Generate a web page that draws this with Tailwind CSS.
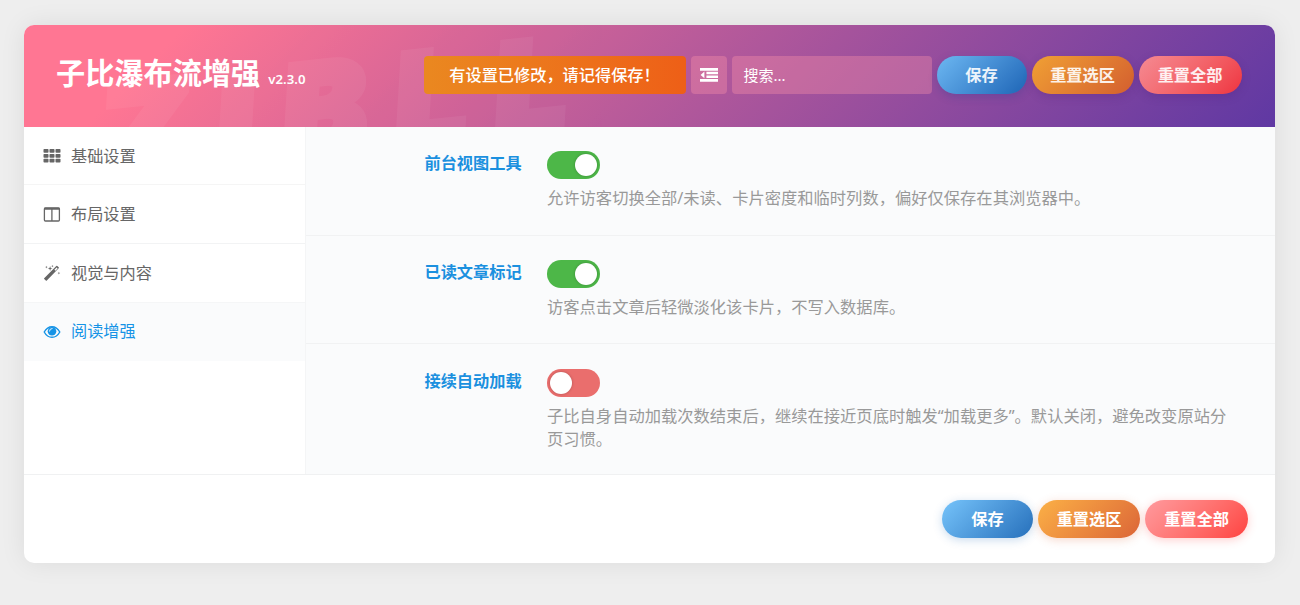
<!DOCTYPE html>
<html lang="zh-CN">
<head>
    <meta charset="UTF-8">
    <meta name="viewport" content="width=device-width, initial-scale=1.0">
    <title>子比瀑布流增强</title>
    <script src="https://cdn.jsdelivr.net/npm/@tailwindcss/browser@4"></script>
</head>
<body class="h-[605px] overflow-hidden bg-[#eeeeee] pt-[25px] pl-6 font-['Noto_Sans','Noto_Sans_CJK_SC',sans-serif] text-[16.2px]">
    <div class="w-[1251px] h-[538px] flex flex-col overflow-hidden rounded-[10px] bg-white shadow-[0_0_26px_rgba(0,0,0,0.08)]">

        <!-- Header -->
        <header class="relative h-[102px] shrink-0 overflow-hidden flex items-center justify-between pl-8 pr-[33.5px] pb-[2px] bg-[linear-gradient(135deg,#ff7693_12%,#5f38a3_100%)] text-white">
            <div class="absolute left-[75px] top-[19px] text-[126px] leading-[124px] font-black italic tracking-[29px] font-['Inter'] [-webkit-text-stroke:8px_white] opacity-5 -rotate-6 select-none">ZIBLL</div>
            <h1 class="relative flex items-baseline gap-2 text-[29.2px] leading-none font-bold whitespace-nowrap pb-[3px]">
                子比瀑布流增强 <small class="text-[13.2px] font-semibold">v2.3.0</small>
            </h1>
            <div class="relative flex items-center gap-[5px]">
                <div class="w-[262px] h-[38px] flex items-center justify-center rounded-[4px] bg-linear-to-r from-[#ea8820] to-[#ee5f17] font-medium whitespace-nowrap">有设置已修改，请记得保存！</div>
                <button class="w-[36px] h-[38px] flex items-center justify-center rounded-[4px] bg-[#ff96aa]/35">
                    <svg class="w-[18px] h-[14px]" viewBox="0 0 18 14" fill="currentColor">
                        <path d="M0 0h18v2.7H0zM6.4 3.7H18v2.6H6.4zM6.4 7.4H18V10H6.4zM0 11.1h18v2.7H0zM4.4 3.6v6.6L.6 6.9z"/>
                    </svg>
                </button>
                <div class="w-[200px] h-[38px] flex items-center rounded-[4px] bg-[#ff96aa]/35 px-3 text-[15px]">搜索...</div>
                <button class="w-[90px] h-[38px] rounded-full bg-linear-135 from-[#6db8f2] to-[#1d65b6] font-bold text-white/90 shadow-[0_3px_8px_rgba(30,60,140,0.25)]">保存</button>
                <button class="w-[102px] h-[38px] rounded-full bg-linear-135 from-[#f0a034] to-[#d35e2f] font-bold text-white/90 shadow-[0_3px_8px_rgba(80,30,120,0.25)]">重置选区</button>
                <button class="w-[103px] h-[38px] rounded-full bg-linear-135 from-[#f58a93] to-[#ee3140] font-bold text-white/90 shadow-[0_3px_8px_rgba(80,30,120,0.25)]">重置全部</button>
            </div>
        </header>

        <div class="flex h-[348px] shrink-0 border-b border-[#f0f1f2]">
            <!-- Sidebar -->
            <nav class="w-[282px] border-r border-[#f4f5f6] text-[#666]">
                <a class="flex items-center gap-[10px] h-[58px] pl-[19px] pt-px border-b border-[#f5f5f5]">
                    <svg class="w-[18px] h-[14px]" viewBox="0 0 18 14" fill="currentColor">
                        <rect x=".5" width="5" height="3.8" rx=".8"/><rect x="6.5" width="5" height="3.8" rx=".8"/><rect x="12.5" width="5" height="3.8" rx=".8"/>
                        <rect x=".5" y="4.9" width="5" height="3.8" rx=".8"/><rect x="6.5" y="4.9" width="5" height="3.8" rx=".8"/><rect x="12.5" y="4.9" width="5" height="3.8" rx=".8"/>
                        <rect x=".5" y="9.8" width="5" height="3.8" rx=".8"/><rect x="6.5" y="9.8" width="5" height="3.8" rx=".8"/><rect x="12.5" y="9.8" width="5" height="3.8" rx=".8"/>
                    </svg>
                    基础设置
                </a>
                <a class="flex items-center gap-[10px] h-[59px] pl-[19px] border-b border-[#f2f3f4]">
                    <svg class="w-[18px] h-[15px]" viewBox="0 0 18 15" fill="none" stroke="currentColor">
                        <rect x="1.4" y="1" width="15" height="13" rx="1" stroke-width="1.3"/>
                        <path d="M1.2 1.8h15.4" stroke-width="2"/>
                        <path d="M8.9 2v12" stroke-width="1.3"/>
                    </svg>
                    布局设置
                </a>
                <a class="flex items-center gap-[10px] h-[59px] pl-[19px] border-b border-[#f5f6f7]">
                    <svg class="w-[18px] h-[16px]" viewBox="0 0 18 16" fill="currentColor">
                        <path fill-rule="evenodd" d="M1.2 13.2 13.3.9q.5-.4 1 0l1.4 1.4q.5.5 0 1L3.8 15.5q-.5.4-1 0l-1.6-1.4q-.4-.4 0-.9zM11.4 4.7l1.1 1 2.1-2.2-1-1z"/>
                        <path d="m3.4.8.3 1 1 .3-1 .3-.3 1-.3-1-1-.3 1-.3zM7.1 1.1l.6 1.8 1.8.6-1.8.6-.6 1.8-.6-1.8-1.8-.6 1.8-.6zM15.9 6.8l.3 1 1 .3-1 .3-.3 1-.3-1-1-.3 1-.3zM9.4 0l.3.8.9.3-.9.3-.3.9-.3-.9-.8-.3.8-.3z"/>
                    </svg>
                    视觉与内容
                </a>
                <a class="flex items-center gap-[10px] h-[58px] pl-[19px] pb-px bg-[#fafbfc] text-[#1593e6]">
                    <svg class="w-[18px] h-[14px]" viewBox="0 0 18 14">
                        <path d="M1.2 7C3 3.8 5.8 1.7 9 1.7S15 3.8 16.8 7C15 10.2 12.2 12.3 9 12.3S3 10.2 1.2 7z" fill="none" stroke="currentColor" stroke-width="1.4"/>
                        <circle cx="9" cy="6.2" r="4.3" fill="currentColor"/>
                        <path d="M6.5 6.1A2.6 2.6 0 0 1 9.1 3.5" fill="none" stroke="#fff" stroke-width=".9" stroke-linecap="round"/>
                    </svg>
                    阅读增强
                </a>
            </nav>

            <!-- Settings -->
            <main class="flex-1 bg-[#fafbfc] text-[#999]">
                <section class="flex h-[109px] pt-[24px] border-b border-[#f1f2f3]">
                    <h4 class="w-[241px] pl-[118.5px] leading-[25px] font-bold text-[#1b90df] whitespace-nowrap">前台视图工具</h4>
                    <div>
                        <div class="w-[53px] h-[28px] rounded-full bg-[#4db748] p-[3px] flex justify-end">
                            <span class="size-[22px] rounded-full bg-white shadow-[0_0_3px_rgba(0,0,0,0.25)]"></span>
                        </div>
                        <p class="mt-[8px] leading-[23px] text-[16.3px]">允许访客切换全部/未读、卡片密度和临时列数，偏好仅保存在其浏览器中。</p>
                    </div>
                </section>
                <section class="flex h-[108px] pt-[24px] border-b border-[#f1f2f3]">
                    <h4 class="w-[241px] pl-[118.5px] leading-[25px] font-bold text-[#1b90df] whitespace-nowrap">已读文章标记</h4>
                    <div>
                        <div class="w-[53px] h-[28px] rounded-full bg-[#4db748] p-[3px] flex justify-end">
                            <span class="size-[22px] rounded-full bg-white shadow-[0_0_3px_rgba(0,0,0,0.25)]"></span>
                        </div>
                        <p class="mt-[8px] leading-[23px] text-[16.3px]">访客点击文章后轻微淡化该卡片，不写入数据库。</p>
                    </div>
                </section>
                <section class="flex h-[130px] pt-[25px]">
                    <h4 class="w-[241px] pl-[118.5px] leading-[25px] font-bold text-[#1b90df] whitespace-nowrap">接续自动加载</h4>
                    <div>
                        <div class="w-[53px] h-[28px] rounded-full bg-[#ea6e6d] p-[3px] flex">
                            <span class="size-[22px] rounded-full bg-white shadow-[0_0_3px_rgba(0,0,0,0.25)]"></span>
                        </div>
                        <p class="mt-[8px] leading-[23px] text-[16.3px] whitespace-nowrap">子比自身自动加载次数结束后，继续在接近页底时触发“加载更多”。默认关闭，避免改变原站分<br>页习惯。</p>
                    </div>
                </section>
            </main>
        </div>

        <!-- Footer -->
        <footer class="flex-1 flex items-center justify-end gap-[5px] pr-[27px] text-white font-bold">
            <button class="w-[91px] h-[38px] rounded-full bg-linear-135 from-[#76c4fb] to-[#2670bb] shadow-[0_2px_10px_rgba(38,112,187,0.25)]">保存</button>
            <button class="w-[102px] h-[38px] rounded-full bg-linear-135 from-[#fbb046] to-[#db6537] shadow-[0_2px_10px_rgba(219,101,55,0.25)]">重置选区</button>
            <button class="w-[103px] h-[38px] rounded-full bg-linear-135 from-[#ff9a9e] to-[#ff4040] shadow-[0_2px_10px_rgba(255,64,64,0.25)]">重置全部</button>
        </footer>
    </div>
</body>
</html>
